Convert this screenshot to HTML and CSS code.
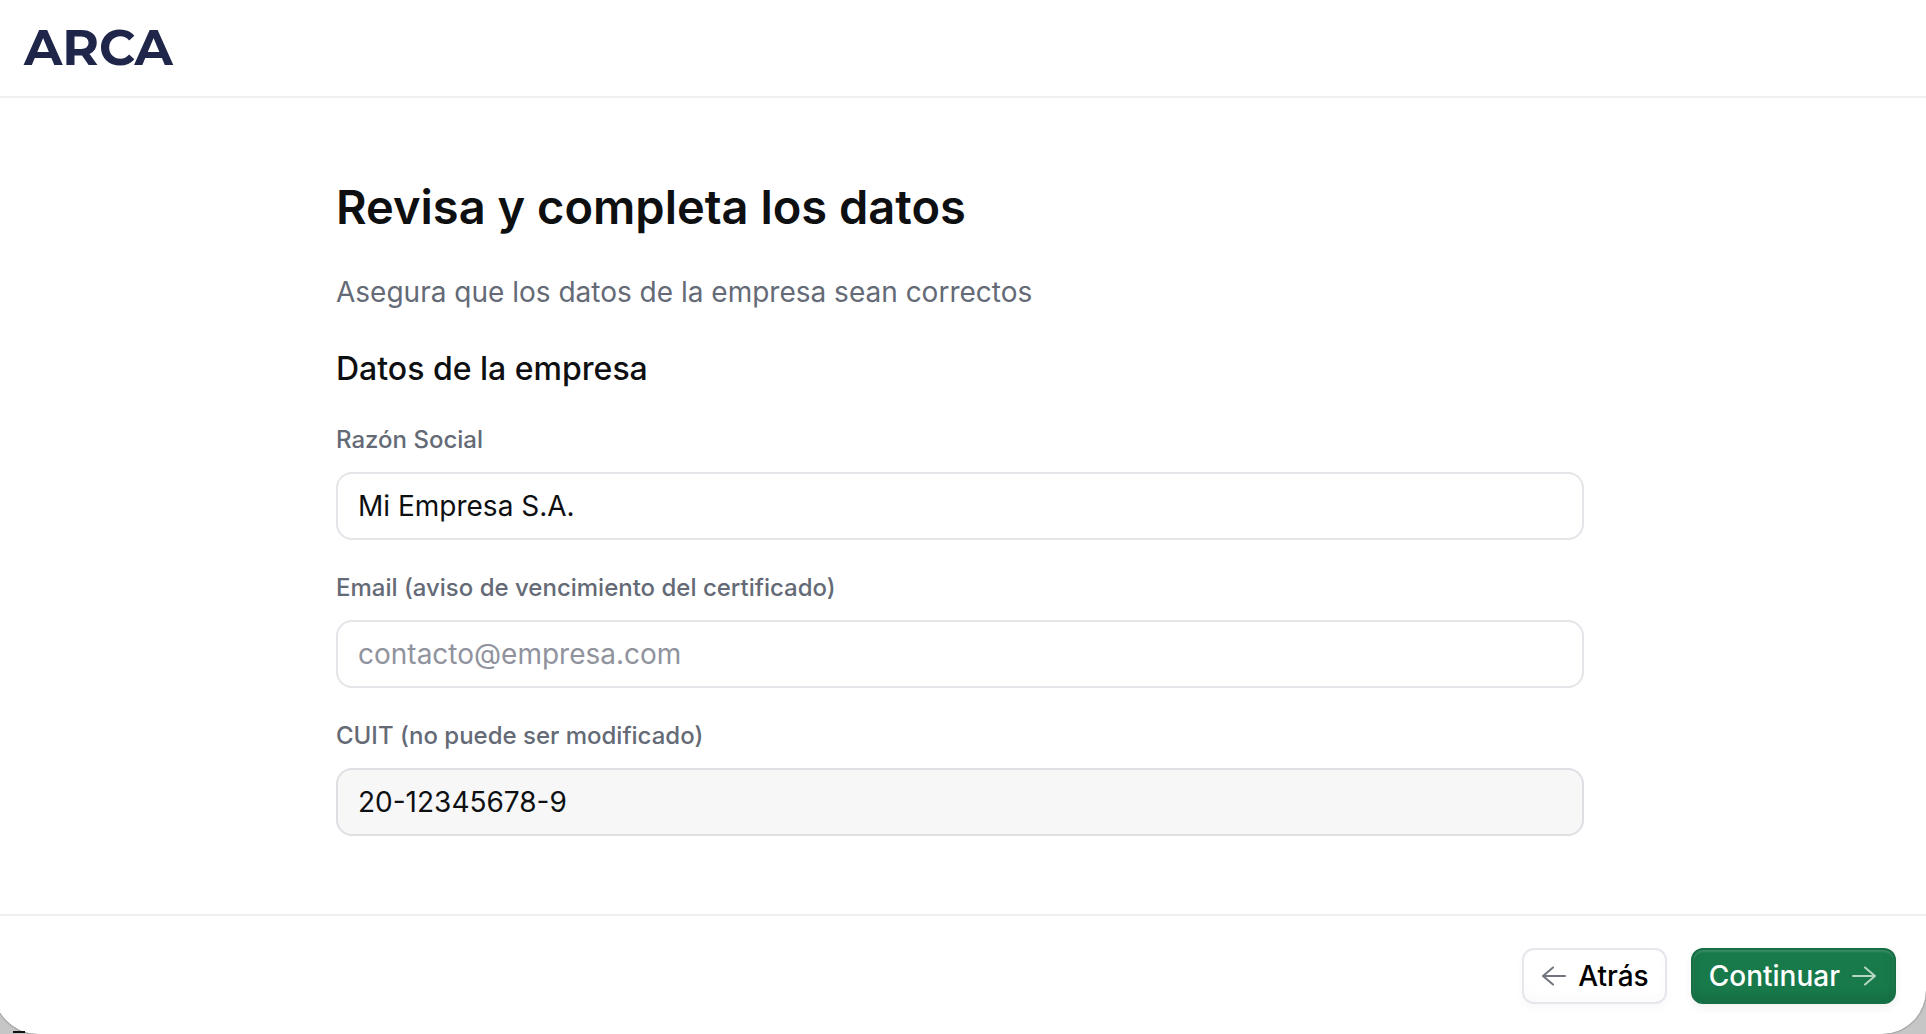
FILE: index.html
```html
<!DOCTYPE html>
<html lang="es">
<head>
    <meta charset="UTF-8">
    <meta name="viewport" content="width=device-width, initial-scale=1.0">
    <title>ARCA - Datos de la empresa</title>
    <link rel="stylesheet" href="styles.css">
</head>
<body>
    <form class="dialog">
        <header class="dialog-header">
            <span class="logo">ARCA</span>
        </header>

        <main class="dialog-body">
            <div class="content">
                <h1>Revisa y completa los datos</h1>
                <p class="subtitle">Asegura que los datos de la empresa sean correctos</p>
                <h2>Datos de la empresa</h2>
                <div class="form-group">
                    <label for="razonSocial">Razón Social</label>
                    <input type="text" id="razonSocial" name="razonSocial" value="Mi Empresa S.A.">
                </div>
                <div class="form-group">
                    <label for="email">Email (aviso de vencimiento del certificado)</label>
                    <input type="email" id="email" name="email" placeholder="contacto@empresa.com">
                </div>
                <div class="form-group">
                    <label for="cuit">CUIT (no puede ser modificado)</label>
                    <input type="text" id="cuit" name="cuit" value="20-12345678-9" readonly>
                </div>
            </div>
        </main>

        <footer class="dialog-footer">
            <button type="button" class="btn btn-secondary">
                <svg class="icon" viewBox="0 0 24 20" aria-hidden="true">
                    <path d="M23 10H1M11 1.5L1 10l10 8.5"/>
                </svg>
                Atrás
            </button>
            <button type="submit" class="btn btn-primary">
                Continuar
                <svg class="icon" viewBox="0 0 24 20" aria-hidden="true">
                    <path d="M1 10h22M13 1.5l10 8.5-10 8.5"/>
                </svg>
            </button>
        </footer>
    </form>
    <span class="page-mark"></span>
</body>
</html>
```
FILE: styles.css
```css
:root {
    --primary-color: #187a4b;
    --text-color: #0e0f11;
    --muted-color: #646a76;
    --placeholder-color: #90939d;
    --border-color: #e4e5e9;
    --line-color: #f0f0f1;
}

* {
    margin: 0;
    padding: 0;
    box-sizing: border-box;
    font-family: Inter, sans-serif;
}

body {
    background-color: #c6c6c6;
    color: var(--text-color);
    min-height: 100vh;
    display: flex;
    overflow: hidden;
}

/* The dialog runs slightly past the left edge of the page */
.dialog {
    flex: 1;
    display: flex;
    flex-direction: column;
    margin-left: -6px;
    background-color: #fff;
    border-radius: 0 0 44px 44px;
    box-shadow: 0 0 2px rgba(0, 0, 0, 0.6);
}

.dialog-header {
    display: flex;
    align-items: center;
    height: 98px;
    padding: 0 30px;
    border-bottom: 2px solid var(--line-color);
}

.logo {
    color: #20264a;
    font-family: Montserrat, "DejaVu Sans", sans-serif;
    font-size: 50px;
    font-weight: 700;
    line-height: 60px;
}

.dialog-body {
    flex: 1;
    padding: 78px 32px;
}

.content {
    max-width: 1248px;
    margin: 0 auto;
}

h1 {
    margin-bottom: 34px;
    font-size: 47px;
    font-weight: 600;
    line-height: 62px;
}

.subtitle {
    margin-bottom: 32px;
    color: var(--muted-color);
    font-size: 28px;
    line-height: 40px;
}

h2 {
    margin-bottom: 30px;
    font-size: 32px;
    font-weight: 500;
    line-height: 50px;
}

.form-group {
    margin-bottom: 32px;
}

.form-group:last-child {
    margin-bottom: 0;
}

.form-group label {
    display: block;
    margin-bottom: 16px;
    color: var(--muted-color);
    font-size: 24px;
    font-weight: 500;
    line-height: 32px;
}

.form-group input {
    display: block;
    width: 100%;
    height: 68px;
    padding: 0 20px;
    border: 2px solid var(--border-color);
    border-radius: 16px;
    background-color: #fff;
    color: var(--text-color);
    font-size: 28px;
}

.form-group input::placeholder {
    color: var(--placeholder-color);
}

.form-group input:focus {
    outline: none;
    border-color: var(--primary-color);
}

.form-group input[readonly] {
    background-color: #f7f7f8;
    border-color: #dfdfe4;
}

.dialog-footer {
    display: flex;
    align-items: center;
    justify-content: flex-end;
    gap: 24px;
    padding: 32px 30px 30px;
    border-top: 2px solid var(--line-color);
}

.btn {
    display: flex;
    align-items: center;
    gap: 12px;
    height: 56px;
    border: 2px solid transparent;
    border-radius: 12px;
    font-size: 28px;
    font-weight: 500;
    cursor: pointer;
}

.btn-secondary {
    padding: 0 16px 0 18px;
    background-color: #fff;
    border-color: #e6e6ec;
    color: #000;
    box-shadow: 0 4px 8px rgba(0, 0, 0, 0.03), inset 0 -6px 12px rgba(0, 0, 0, 0.02);
}

.btn-primary {
    padding: 0 18px 0 16px;
    background-color: var(--primary-color);
    border-color: #176f45;
    color: #fff;
    box-shadow: 0 4px 8px rgba(0, 0, 0, 0.06), inset 0 2px 2px rgba(255, 255, 255, 0.15), inset 0 -6px 12px rgba(0, 0, 0, 0.1);
}

.icon {
    width: 24px;
    height: 20px;
    fill: none;
    stroke: #70747f;
    stroke-width: 2;
    stroke-linecap: round;
    stroke-linejoin: round;
}

.btn-primary .icon {
    stroke: #b5d6c5;
}

/* Bit of the page that shows under the rounded corner */
.page-mark {
    position: absolute;
    left: 13px;
    bottom: 1px;
    width: 12px;
    height: 2px;
    background-color: #111;
}
```
